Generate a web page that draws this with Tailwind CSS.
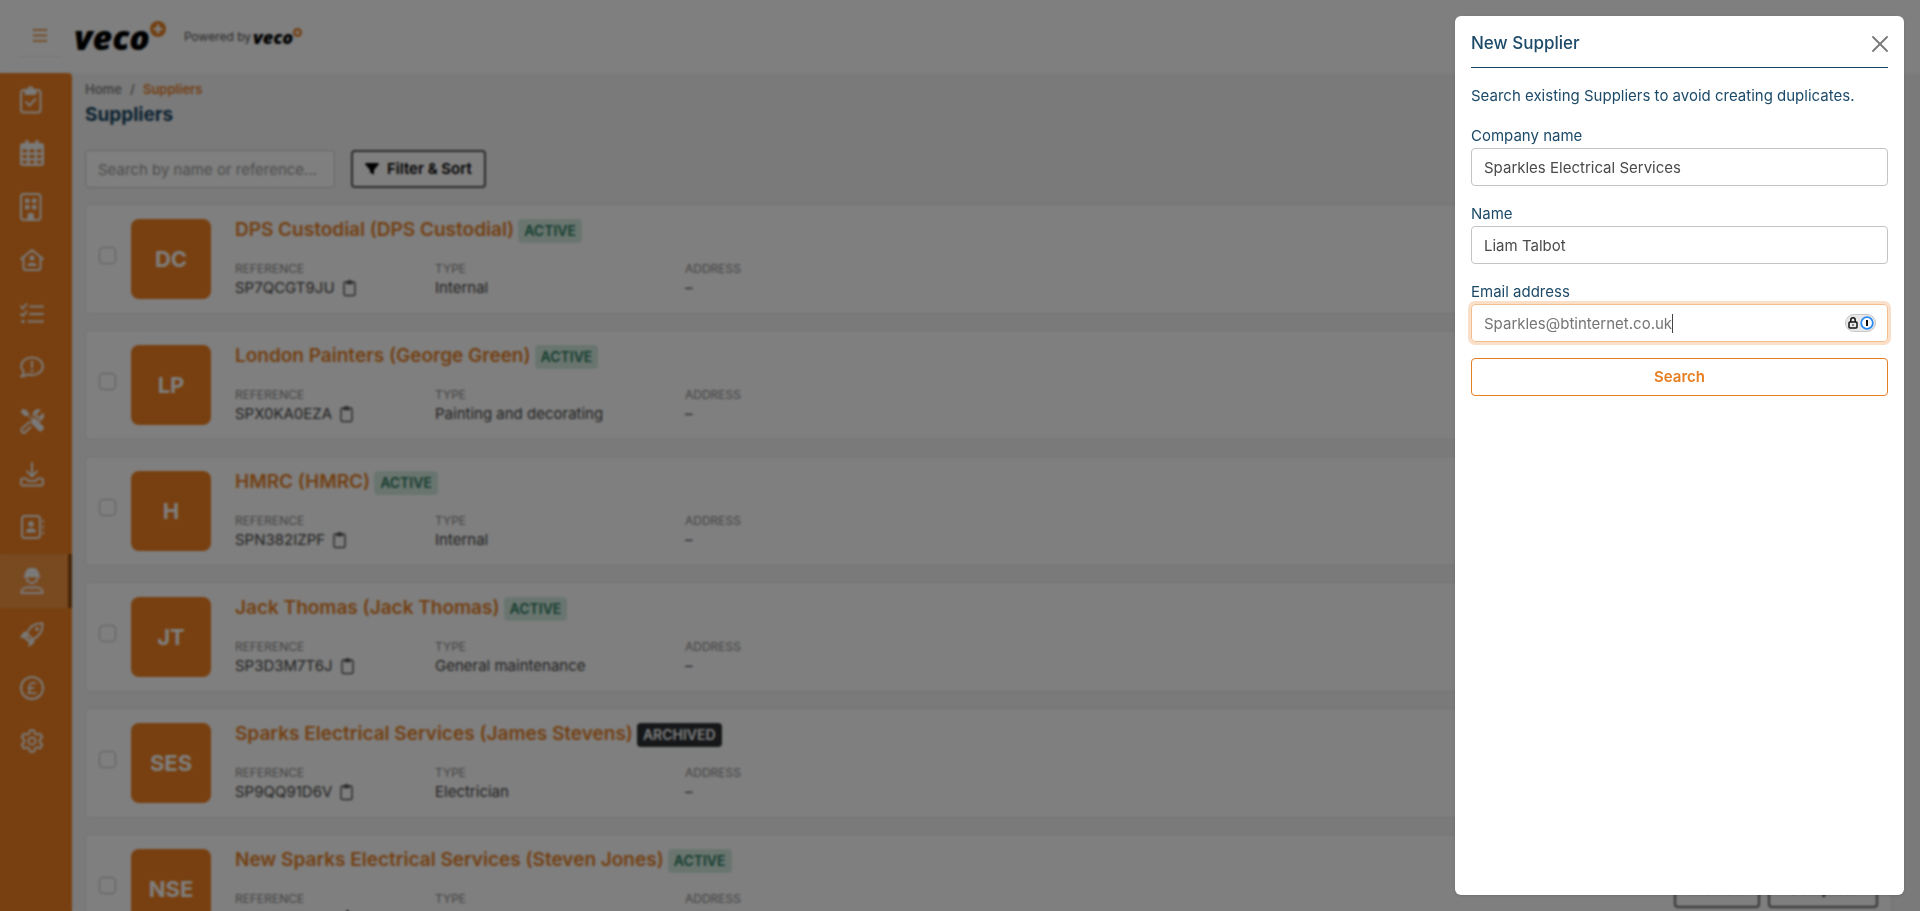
<!DOCTYPE html>
<html lang="en">
<head>
<meta charset="utf-8">
<title>Suppliers</title>
<script src="https://cdn.jsdelivr.net/npm/@tailwindcss/browser@4"></script>
</head>
<body class="h-screen overflow-hidden bg-[#f5f5f5] font-['Inter',sans-serif] text-[15px] text-[#444]">

<div class="flex h-screen flex-col overflow-hidden">
  <header class="flex h-[73px] shrink-0 items-center bg-white pl-[19px]">
    <button type="button" aria-label="Menu" class="flex h-10 w-[42px] items-center justify-center border-b border-[#eee] text-[#e67e22]">
      <svg width="16" height="16" viewBox="0 0 16 16" fill="none" stroke="currentColor" stroke-width="1.700"><path d="M1 2h14M1 7.500h14M1 13h14"/></svg>
    </button>
    <a href="#" aria-label="veco" class="ml-[13px] flex items-start text-black">
      <span class="font-['Open_Sans',sans-serif] text-[34px] leading-[44px] font-extrabold italic">veco</span>
      <svg width="16" height="16" viewBox="0 0 16 16" class="mt-[6px]"><circle cx="8" cy="8" r="8" fill="#e67e22"/><path d="M8 3.500v9M3.500 8h9" stroke="#fff" stroke-width="2.600"/></svg>
    </a>
    <div class="ml-[18px] flex items-center">
      <span class="text-xs text-[#555]">Powered by</span>
      <span class="ml-[2px] flex items-start text-black">
        <span class="font-['Open_Sans',sans-serif] text-lg leading-6 font-extrabold italic">veco</span>
        <svg width="9" height="9" viewBox="0 0 16 16" class="mt-[3px]"><circle cx="8" cy="8" r="8" fill="#e67e22"/><path d="M8 3.500v9M3.500 8h9" stroke="#fff" stroke-width="2.600"/></svg>
      </span>
    </div>
  </header>

  <div class="flex min-h-0 flex-1">
    <nav aria-label="Main" class="w-[72px] shrink-0 rounded-tr bg-[#f08020] text-[#f4f4f4]">
      <div class="flex h-[695px] flex-col">
        <a href="#" aria-label="Tasks" class="flex flex-1 items-center pl-5">
          <svg width="24" height="28" viewBox="0 0 24 28" fill="none" stroke="currentColor" stroke-width="2"><rect x="1" y="4" width="19.500" height="22.500" rx="3"/><path d="M5.500 4.500h10v3.500h-10z" fill="currentColor" stroke-linejoin="round"/><circle cx="10.500" cy="3.500" r="2.200"/><path d="M6 16l3.500 3.500 6-6.500" stroke-linecap="round"/></svg>
        </a>
        <a href="#" aria-label="Calendar" class="flex flex-1 items-center pl-5">
          <svg width="24" height="28" viewBox="0 0 24 28" fill="currentColor" fill-rule="evenodd"><path d="M5.500 1h3v3h7V1h3v3H21a3 3 0 0 1 3 3v17a3 3 0 0 1-3 3H3a3 3 0 0 1-3-3V7a3 3 0 0 1 3-3h2.500zM2.500 10.500v3h4.500v-3zm7 0v3h5v-3zm7.500 0v3h4.500v-3zM2.500 16v3h4.500v-3zm7 0v3h5v-3zm7.500 0v3h4.500v-3zM2.500 21.500v3h4.500v-3zm7 0v3h5v-3zm7.500 0v3h4.500v-3z"/></svg>
        </a>
        <a href="#" aria-label="Buildings" class="flex flex-1 items-center pl-5">
          <svg width="24" height="28" viewBox="0 0 24 28" fill="none" stroke="currentColor" stroke-width="2"><rect x="1" y="1" width="19.500" height="26" rx="3"/><path d="M6 6.500h2.500V9H6zM13 6.500h2.500V9H13zM6 13h2.500v2.500H6zM13 13h2.500v2.500H13z" stroke-linejoin="round"/><path d="M8.500 26v-3a2.200 2.200 0 0 1 4.500 0v3z" fill="currentColor"/></svg>
        </a>
        <a href="#" aria-label="Properties" class="flex flex-1 items-center pl-5">
          <svg width="24" height="28" viewBox="0 0 24 28" fill="none" stroke="currentColor" stroke-width="2" stroke-linecap="round" stroke-linejoin="round"><path d="M1 13L12 4l11 9M3.500 11.500v10a2.500 2.500 0 0 0 2.500 2.500h12a2.500 2.500 0 0 0 2.500-2.500v-10"/><circle cx="12" cy="12" r="2.500" fill="currentColor" stroke="none"/><path d="M7.500 20a3 3 0 0 1 3-3h3a3 3 0 0 1 3 3z" fill="currentColor" stroke="none"/></svg>
        </a>
        <a href="#" aria-label="Checklists" class="flex flex-1 items-center pl-5">
          <svg width="24" height="28" viewBox="0 0 24 28" fill="none" stroke="currentColor" stroke-width="2" stroke-linecap="round" stroke-linejoin="round"><path d="M10 6.500h13M10 14h13M8.500 21.500H23M1 6.500l2 2 3.500-4.500M1 14l2 2 3.500-4.500"/><circle cx="3" cy="21.500" r="1.700" fill="currentColor" stroke="none"/></svg>
        </a>
        <a href="#" aria-label="Messages" class="flex flex-1 items-center pl-5">
          <svg width="24" height="28" viewBox="0 0 24 28" fill="none" stroke="currentColor" stroke-width="2" stroke-linecap="round" stroke-linejoin="round"><path d="M3.800 18.500C2.300 17 1.200 15.200 1.200 13.200 1.200 8.300 6 4.500 12 4.500s10.800 3.800 10.800 8.700S18 22 12 22c-1.600 0-3-.3-4.300-.8C6 22.500 3.500 23.500 1.200 23.500c1.300-1.300 2.500-3 2.600-5z"/><path d="M12 8.500v5.500"/><circle cx="12" cy="17.800" r="1.400" fill="currentColor" stroke="none"/></svg>
        </a>
        <a href="#" aria-label="Maintenance" class="flex flex-1 items-center pl-5">
          <svg width="24" height="28" viewBox="0 0 24 28" fill="none" stroke="currentColor" stroke-width="2" stroke-linejoin="round"><path d="M1 4.500L3.500 2 8 5v3l4 4 3-.5 8 8c1 1 .5 2.500-.5 3.500s-2.500 1.500-3.500.500l-7.500-7.500.500-3.500-4-4H4.500z" fill="currentColor" stroke-width="1"/><path d="M13.500 9.500c-.8-3.500 2-7 6-6.500l-3.500 3.500.5 3.500 3.500.5L23 7.200c.7 3.800-2.300 6.500-5.500 6.500M10 14.500l-8 7a2.300 2.300 0 0 0 3.500 3.500L11 19.500"/></svg>
        </a>
        <a href="#" aria-label="Downloads" class="flex flex-1 items-center pl-5">
          <svg width="24" height="28" viewBox="0 0 24 28" fill="none" stroke="currentColor" stroke-width="2" stroke-linecap="round" stroke-linejoin="round"><path d="M12 3v13M7 11.500l5 5 5-5"/><path d="M6 18.500H3.200A2.200 2.200 0 0 0 1 20.700v2.600a2.200 2.200 0 0 0 2.200 2.200h17.600a2.200 2.200 0 0 0 2.200-2.200v-2.600a2.200 2.200 0 0 0-2.200-2.200H18l-2.500 2.500h-7z"/></svg>
        </a>
        <a href="#" aria-label="Contacts" class="flex flex-1 items-center pl-5">
          <svg width="24" height="28" viewBox="0 0 24 28" fill="none" stroke="currentColor" stroke-width="2" stroke-linecap="round"><rect x="2" y="3" width="18" height="22" rx="3"/><circle cx="11" cy="11" r="2.800" fill="currentColor" stroke="none"/><path d="M6 19.500a4 4 0 0 1 4-4h2a4 4 0 0 1 4 4z" fill="currentColor" stroke="none"/><path d="M23.300 7v2M23.300 13v2M23.300 19v2" stroke-width="1.500"/></svg>
        </a>
        <a href="#" aria-label="Suppliers" aria-current="page" class="flex flex-1 items-center border-r-4 border-[#8f4a0c] bg-white/15 pl-5">
          <svg width="24" height="28" viewBox="0 0 24 28" fill="none" stroke="currentColor" stroke-width="2" stroke-linecap="round" stroke-linejoin="round"><path d="M4.500 9.500C4.500 5 7 1.500 9.500 1h5c2.500.5 5 4 5 8.500z" fill="currentColor" stroke="none"/><path d="M4 9.500h16" stroke-width="1.500"/><path d="M6.500 10.500a5.500 5.500 0 0 0 11 0"/><path d="M1.200 26c0-3.500 2.800-5.500 6-5.500h9.600c3.200 0 6 2 6 5.500z"/></svg>
        </a>
        <a href="#" aria-label="Launch" class="flex flex-1 items-center pl-5">
          <svg width="24" height="28" viewBox="0 0 24 28" fill="none" stroke="currentColor" stroke-width="2" stroke-linejoin="round"><path d="M7 13.500C9 7.500 13 3 22.500 3.200 23 12 18.500 17 12.500 19.500z"/><path d="M7.500 12.500L4 12 .5 17.500l5.500-.5zM13.500 19.500l.5 3-5 4 .3-5.500zM5.500 16l4.500 4.500-1.500 1.500L4 17.500z" fill="currentColor" stroke-width="1"/><circle cx="17" cy="9" r="1.900" fill="currentColor" stroke="none"/></svg>
        </a>
        <a href="#" aria-label="Payments" class="flex flex-1 items-center pl-5">
          <svg width="24" height="28" viewBox="0 0 24 28" fill="none" stroke="currentColor" stroke-width="2" stroke-linecap="round" stroke-linejoin="round"><circle cx="12" cy="14" r="11"/><path d="M15.500 9.500c-2.500-1.500-6-.5-6 2.500v4c0 1.500-.5 2.500-1.200 3.200h7.700M8.300 14.200h5.500" stroke-width="1.800"/></svg>
        </a>
        <a href="#" aria-label="Settings" class="flex flex-1 items-center pl-5">
          <svg width="24" height="28" viewBox="0 0 24 28" fill="none" stroke="currentColor" stroke-width="2" stroke-linejoin="round"><path d="M10 3.200h4l.8 3.100 2.200 1.300 3.100-.9 2.100 3.500-2.300 2.300v3l2.300 2.300-2.100 3.500-3.100-.9-2.200 1.300-.8 3.100h-4l-.8-3.100L7 20.400l-3.100.9-2.100-3.500 2.300-2.300v-3l-2.300-2.300 2.100-3.500 3.100.9 2.200-1.300z"/><circle cx="12" cy="14" r="3.600"/></svg>
        </a>
      </div>
    </nav>

    <main class="min-w-0 flex-1 pt-[6px] pr-7 pl-[13px]">
      <nav aria-label="Breadcrumb" class="flex gap-2 text-[13px] leading-5 font-semibold text-[#888]">
        <a href="#">Home</a><span>/</span><a href="#" class="text-[#e67e22]">Suppliers</a>
      </nav>
      <h1 class="text-[19px] leading-8 font-bold text-[#154360]">Suppliers</h1>
      <div class="mt-[19px] flex gap-4">
        <input type="text" aria-label="Search suppliers" placeholder="Search by name or reference..." class="h-[38px] w-[250px] rounded border border-[#ccc] bg-white px-3 placeholder:text-[#999]">
        <button type="button" class="flex h-[38px] items-center gap-2 rounded border-2 border-[#555] bg-white px-3 font-semibold text-black">
          <svg width="14" height="14" viewBox="0 0 14 14" fill="currentColor"><path d="M.8 1h12.400c.8 0 1 .8.600 1.300L9 8v4.800L5 10.500V8L.2 2.300C-.2 1.800 0 1 .8 1z"/></svg>
          Filter &amp; Sort
        </button>
      </div>
      <ul id="suppliers" class="mt-4 flex flex-col gap-4"></ul>
    </main>
  </div>
</div>

<div class="fixed inset-0 bg-black/50 backdrop-blur-[1px]"></div>

<aside role="dialog" aria-labelledby="panel-title" class="fixed inset-y-4 right-4 w-[449px] rounded-md bg-white px-4 text-[#1c4a68] shadow">
  <div class="flex h-[52px] items-center justify-between border-b border-[#154360] pt-1">
    <h2 id="panel-title" class="text-[17px] font-medium">New Supplier</h2>
    <button type="button" aria-label="Close" class="text-[#777]">
      <svg width="16" height="16" viewBox="0 0 16 16" fill="none" stroke="currentColor" stroke-width="1.800" stroke-linecap="round"><path d="M1 1l14 14M15 1L1 15"/></svg>
    </button>
  </div>
  <form class="mt-4 flex flex-col gap-4 leading-6">
    <p>Search existing Suppliers to avoid creating duplicates.</p>
    <div class="flex flex-col">
      <label for="company">Company name</label>
      <input id="company" type="text" value="Sparkles Electrical Services" class="h-[38px] w-full rounded border border-[#c4c4c4] px-3 text-[#4a4a4a] outline-none">
    </div>
    <div class="flex flex-col">
      <label for="name">Name</label>
      <input id="name" type="text" value="Liam Talbot" class="h-[38px] w-full rounded border border-[#c4c4c4] px-3 text-[#4a4a4a] outline-none">
    </div>
    <div class="flex flex-col">
      <label for="email">Email address</label>
      <div class="relative">
        <input id="email" type="email" value="Sparkles@btinternet.co.uk" class="block h-[38px] w-full rounded border border-[#f3bf91] px-3 text-[#757575] ring-3 ring-[#fadfc9] outline-none">
        <div aria-hidden="true" class="pointer-events-none absolute inset-y-0 left-[201px] flex items-center"><span class="h-[19px] w-px bg-[#444]"></span></div>
        <button type="button" aria-label="Fill from password manager" class="absolute top-[10px] right-3 flex h-[18px] w-[31px] items-center justify-end gap-px rounded-full border border-[#c8c8c8] bg-[#e8e8e8] pr-px">
          <svg width="12" height="14" viewBox="0 0 12 14" fill="none" stroke="#111" stroke-width="1.500"><rect x="2" y="6" width="8" height="6" rx="1"/><path d="M3.800 6V4a2.200 2.200 0 0 1 4.400 0v2"/><path d="M6 8.300v1.500" stroke-width="1.200"/></svg>
          <svg width="14" height="14" viewBox="0 0 14 14"><circle cx="7" cy="7" r="5.800" fill="#fff" stroke="#2a8bf2" stroke-width="1.800"/><path d="M7 4v6" stroke="#111" stroke-width="2"/></svg>
        </button>
      </div>
    </div>
    <button type="submit" class="h-[38px] w-full rounded-sm border border-[#e67e22] bg-white font-semibold text-[#e67e22]">Search</button>
  </form>
</aside>

<script>
const active = 'bg-[#d4ebe1] text-[#2a7a5c]';
const archived = 'bg-[#2b2f33] text-white';
const suppliers = [
  ['DC', 'DPS Custodial (DPS Custodial)', 'ACTIVE', 'SP7QCGT9JU', 'Internal'],
  ['LP', 'London Painters (George Green)', 'ACTIVE', 'SPX0KA0EZA', 'Painting and decorating'],
  ['H', 'HMRC (HMRC)', 'ACTIVE', 'SPN382IZPF', 'Internal'],
  ['JT', 'Jack Thomas (Jack Thomas)', 'ACTIVE', 'SP3D3M7T6J', 'General maintenance'],
  ['SES', 'Sparks Electrical Services (James Stevens)', 'ARCHIVED', 'SP9QQ91D6V', 'Electrician'],
  ['NSE', 'New Sparks Electrical Services (Steven Jones)', 'ACTIVE', '', ''],
];
document.getElementById('suppliers').innerHTML = suppliers.map(([initials, name, status, ref, type]) => `
  <li class="group flex items-center rounded-sm border border-[#e6e6e6] bg-white px-[13px] py-[14px]">
    <input type="checkbox" aria-label="Select ${name}" class="mt-7 size-[17px] shrink-0 appearance-none self-start rounded border border-[#bbb]">
    <div class="ml-[15px] flex size-20 shrink-0 items-center justify-center rounded-lg bg-[#f08020] text-[22px] font-bold text-white">${initials}</div>
    <div class="ml-6 min-w-0 flex-1">
      <div class="flex h-6 gap-1">
        <a href="#" class="text-[19px] leading-[22px] font-semibold text-[#e67e22]">${name}</a>
        <span class="rounded px-[6px] text-sm leading-6 font-semibold ${status === 'ACTIVE' ? active : archived}">${status}</span>
      </div>
      <dl class="mt-[18px] grid grid-cols-[200px_250px_1fr] leading-[22px]">
        <div><dt class="text-xs leading-4 text-[#888]">REFERENCE</dt><dd class="flex h-[22px] items-center gap-2"><span class="min-w-[98px] empty:block not-empty:min-w-0">${ref}</span><button type="button" aria-label="Copy reference" class="text-[#555]"><svg width="13" height="18" viewBox="0 0 13 18" fill="none" stroke="currentColor" stroke-width="1.400"><rect x="1" y="3" width="11" height="13.500" rx="1.500"/><path d="M4 3h5v1.500H4z" fill="currentColor"/><circle cx="6.500" cy="2.500" r="1" fill="currentColor"/></svg></button></dd></div>
        <div><dt class="text-xs leading-4 text-[#888]">TYPE</dt><dd>${type}</dd></div>
        <div><dt class="text-xs leading-4 text-[#888]">ADDRESS</dt><dd>${type && '–'}</dd></div>
      </dl>
    </div>
    <div class="hidden gap-2 font-semibold text-black group-last:flex">
      <button type="button" class="h-[38px] rounded border-2 border-[#666] px-3">Preview</button>
      <button type="button" class="h-[38px] rounded border-2 border-[#666] px-[18px]">Complete</button>
    </div>
  </li>`).join('');
</script>
</body>
</html>
